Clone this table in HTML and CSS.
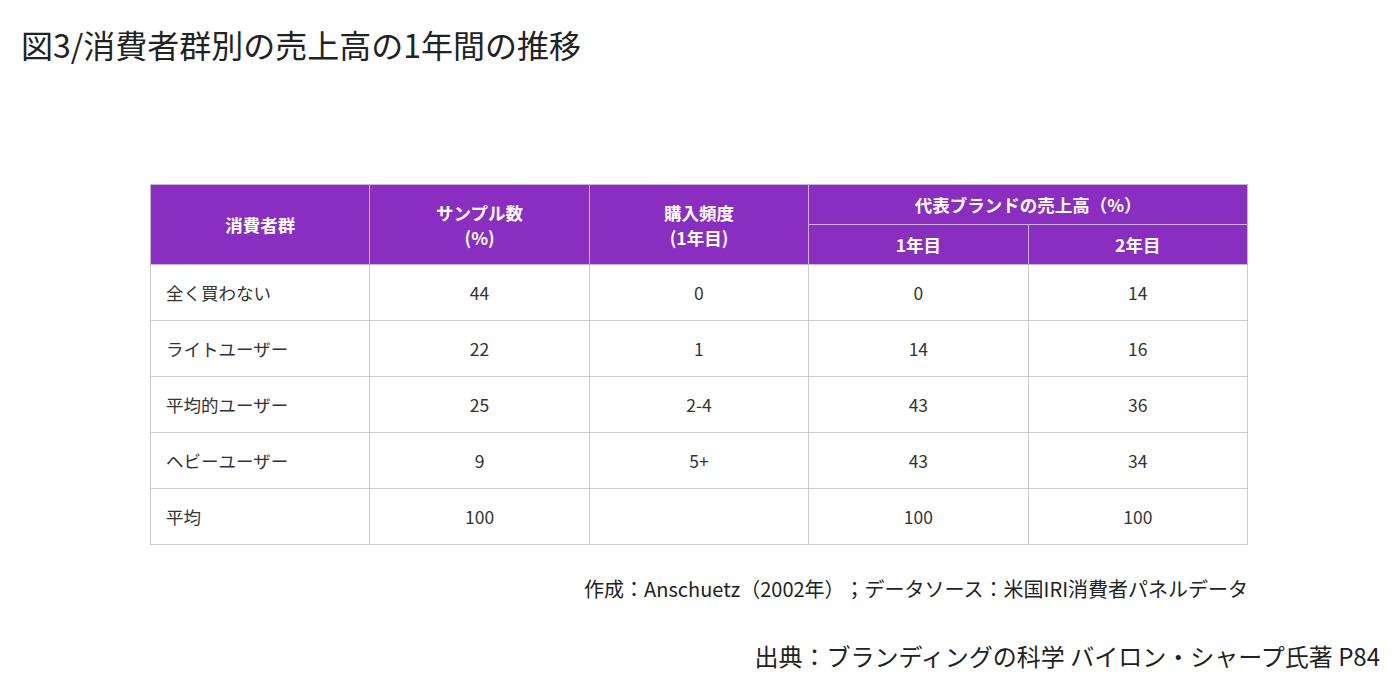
FILE: index.html
```html
<!DOCTYPE html>
<html lang="ja">
<head>
<meta charset="utf-8">
<link rel="stylesheet" href="styles.css">
</head>
<body>
<div class="page">
  <h1 class="title">図3/消費者群別の売上高の1年間の推移</h1>
  <div class="content">
    <table class="data">
      <colgroup>
        <col class="c"><col class="c"><col class="c"><col class="c"><col class="c">
      </colgroup>
      <thead>
        <tr class="h1">
          <th rowspan="2">消費者群</th>
          <th rowspan="2">サンプル数<br>(%)</th>
          <th rowspan="2">購入頻度<br>(1年目)</th>
          <th colspan="2">代表ブランドの売上高（%）</th>
        </tr>
        <tr class="h2">
          <th>1年目</th>
          <th>2年目</th>
        </tr>
      </thead>
      <tbody>
        <tr><td class="name">全く買わない</td><td>44</td><td>0</td><td>0</td><td>14</td></tr>
        <tr><td class="name">ライトユーザー</td><td>22</td><td>1</td><td>14</td><td>16</td></tr>
        <tr><td class="name">平均的ユーザー</td><td>25</td><td>2-4</td><td>43</td><td>36</td></tr>
        <tr><td class="name">ヘビーユーザー</td><td>9</td><td>5+</td><td>43</td><td>34</td></tr>
        <tr><td class="name">平均</td><td>100</td><td></td><td>100</td><td>100</td></tr>
      </tbody>
    </table>
    <p class="note">作成：Anschuetz（2002年）；データソース：米国IRI消費者パネルデータ</p>
  </div>
  <p class="source">出典：ブランディングの科学 バイロン・シャープ氏著 P84</p>
</div>
</body>
</html>
```
FILE: styles.css
```css
html, body {
  margin: 0;
  padding: 0;
  background: #ffffff;
}
body {
  font-family: "Noto Sans CJK JP", "Noto Sans", sans-serif;
  color: #222222;
  text-spacing-trim: space-all;
}
.page {
  width: 1400px;
  height: 700px;
  position: relative;
  overflow: hidden;
}
.title {
  margin: 0;
  padding: 20px 0 0 21px;
  font-size: 32px;
  font-weight: 400;
  line-height: 48px;
  color: #222222;
}
.content {
  width: 1098px;
  margin: 116px 0 0 150px;
}
.data {
  width: 1098px;
  border-collapse: collapse;
  table-layout: fixed;
  font-size: 17.5px;
}
.data th {
  background: #8a2ec2;
  color: #ffffff;
  font-weight: 700;
  font-size: 17.5px;
  line-height: 25px;
  border: 1px solid #c9b3d8;
  padding: 0;
  text-align: center;
}
.data .h1 th[rowspan] {
  height: 79px;
}
.data .h1 th[colspan] {
  height: 39px;
}
.data .h2 th {
  height: 39px;
}
.data td {
  height: 55px;
  border: 1px solid #cccccc;
  padding: 0;
  text-align: center;
  color: #333333;
  line-height: 24px;
}
.data td.name {
  text-align: left;
  padding-left: 15px;
}
.note {
  margin: 30px 0 0 0;
  text-align: right;
  font-size: 20px;
  line-height: 28px;
  color: #222222;
}
.source {
  margin: 36px 20px 0 0;
  text-align: right;
  font-size: 24px;
  line-height: 34px;
  color: #222222;
}
```
